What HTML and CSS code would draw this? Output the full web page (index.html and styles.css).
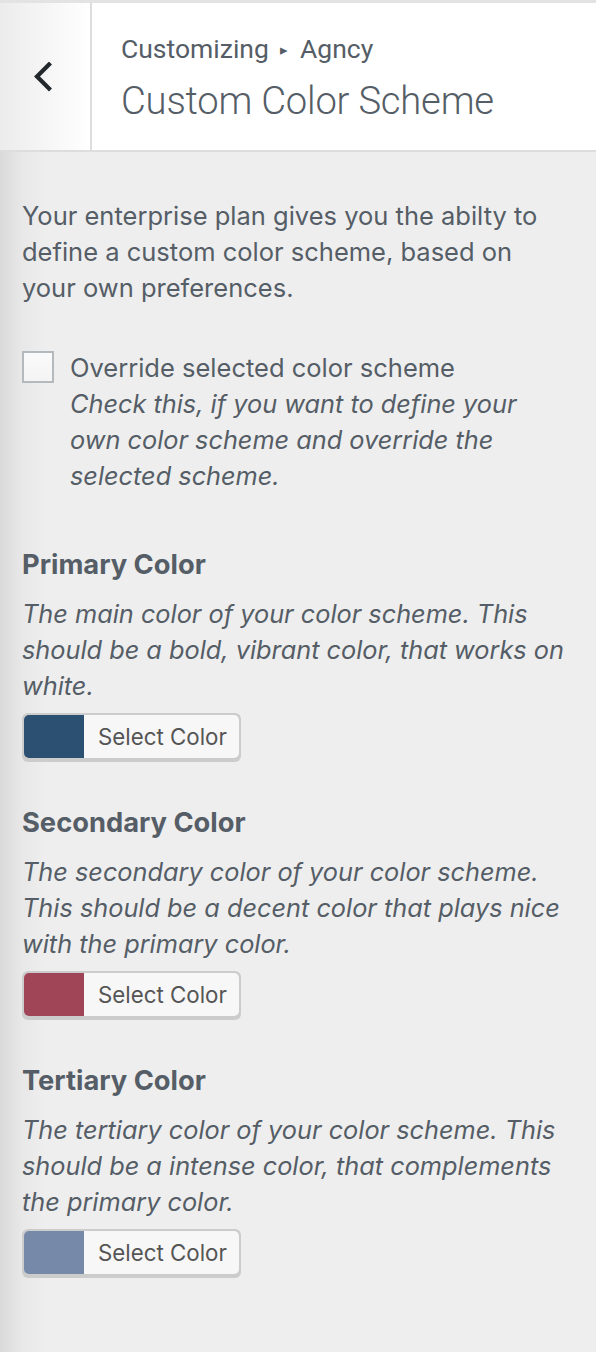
FILE: index.html
```html
<!DOCTYPE html>
<html lang="en">
<head>
<meta charset="utf-8">
<title>Custom Color Scheme</title>
<link rel="stylesheet" href="styles.css">
</head>
<body>
<div class="panel">
  <header class="head">
    <button class="back" type="button" aria-label="Back">
      <svg width="22" height="30" viewBox="0 0 22 30"><path d="M17 2.5 L5 14.5 L17 26.5" fill="none" stroke="#23282d" stroke-width="4.2" stroke-linecap="square" stroke-linejoin="miter"/></svg>
    </button>
    <div class="titles">
      <span class="crumb">Customizing <span class="tri">▸</span> Agncy</span>
      <h1 class="title">Custom Color Scheme</h1>
    </div>
  </header>
  <main class="body">
    <p class="intro">Your enterprise plan gives you the abilty to define a custom color scheme, based on your own preferences.</p>

    <div class="check">
      <span class="box"></span>
      <div class="check-text">
        <span class="check-label">Override selected color scheme</span>
        <span class="desc">Check this, if you want to define your own color scheme and override the selected scheme.</span>
      </div>
    </div>

    <section class="control">
      <h2 class="ctitle">Primary Color</h2>
      <p class="desc">The main color of your color scheme. This should be a bold, vibrant color, that works on white.</p>
      <button class="picker" type="button"><span class="swatch sw-primary"></span><span class="pick-label">Select Color</span></button>
    </section>

    <section class="control">
      <h2 class="ctitle">Secondary Color</h2>
      <p class="desc">The secondary color of your color scheme. This should be a decent color that plays nice with the primary color.</p>
      <button class="picker" type="button"><span class="swatch sw-secondary"></span><span class="pick-label">Select Color</span></button>
    </section>

    <section class="control">
      <h2 class="ctitle">Tertiary Color</h2>
      <p class="desc">The tertiary color of your color scheme. This should be a intense color, that complements the primary color.</p>
      <button class="picker" type="button"><span class="swatch sw-tertiary"></span><span class="pick-label">Select Color</span></button>
    </section>
  </main>
</div>
</body>
</html>
```

FILE: styles.css
```css
html, body {
  margin: 0;
  padding: 0;
}
body {
  width: 596px;
  height: 1352px;
  overflow: hidden;
  background: linear-gradient(to right, #dadada 0, #e8e8e8 22px, #eeeeee 45px);
  font-family: "Inter", "Roboto", "Liberation Sans", sans-serif;
  color: #555d66;
}
.panel {
  display: flex;
  flex-direction: column;
}
.head {
  display: flex;
  height: 147px;
  border-top: 3px solid #e3e3e3;
  border-bottom: 2px solid #dddddd;
  background: #fff;
}
.back {
  width: 92px;
  flex: none;
  border: 0;
  border-right: 2px solid #dddddd;
  padding: 0;
  margin: 0;
  background: linear-gradient(to right, #ececec, #ffffff);
  display: flex;
  align-items: center;
  justify-content: center;
}
.back svg {
  display: block;
  margin-left: -4px;
  margin-top: 0;
}
.titles {
  display: flex;
  flex-direction: column;
  padding: 30px 0 0 29px;
}
.crumb {
  font-family: "Roboto", "Liberation Sans", sans-serif;
  font-size: 26.5px;
  line-height: 32px;
  color: #555d66;
}
.tri {
  font-size: 15px;
  vertical-align: 3px;
  margin: 0 5px;
}
.title {
  margin: 10px 0 0;
  font-family: "Roboto", "Liberation Sans", sans-serif;
  font-weight: 300;
  font-size: 38.2px;
  line-height: 50px;
  color: #555d66;
  letter-spacing: -0.2px;
}
.body {
  display: flex;
  flex-direction: column;
  padding: 46px 28px 0 22px;
}
.intro {
  margin: 0;
  font-size: 25.5px;
  line-height: 36px;
}
.check {
  display: flex;
  gap: 16px;
  margin-top: 44px;
}
.box {
  flex: none;
  width: 28px;
  height: 28px;
  border: 2px solid #b4b9be;
  background: linear-gradient(#fafafa, #f4f4f4);
  margin-top: 1px;
}
.check-text {
  display: flex;
  flex-direction: column;
}
.check-label {
  font-size: 25.5px;
  line-height: 36px;
}
.desc {
  margin: 0;
  font-size: 25.3px;
  line-height: 36px;
  font-style: italic;
}
.control {
  display: flex;
  flex-direction: column;
  align-items: flex-start;
  margin-top: 47px;
}
.control + .control {
  margin-top: 37px;
}
.ctitle {
  margin: 0 0 7px;
  font-size: 27.3px;
  font-weight: 700;
  line-height: 48px;
}
.picker {
  margin-top: 9px;
  display: flex;
  align-items: stretch;
  height: 49px;
  padding: 2px 2px 4px;
  border: 0;
  border-radius: 6px;
  background: #cccccc;
  font-family: "Inter", "Roboto", "Liberation Sans", sans-serif;
}
.swatch {
  width: 60px;
  height: 43px;
  border-radius: 5px 0 0 5px;
}
.sw-primary { background: #2c5072; }
.sw-secondary { background: #a04557; }
.sw-tertiary { background: #7789a9; }
.pick-label {
  width: 155px;
  height: 43px;
  box-sizing: border-box;
  padding-left: 14px;
  background: #f7f7f7;
  border-radius: 0 5px 5px 0;
  font-size: 22.3px;
  line-height: 44px;
  color: #555555;
  text-align: left;
}
```
